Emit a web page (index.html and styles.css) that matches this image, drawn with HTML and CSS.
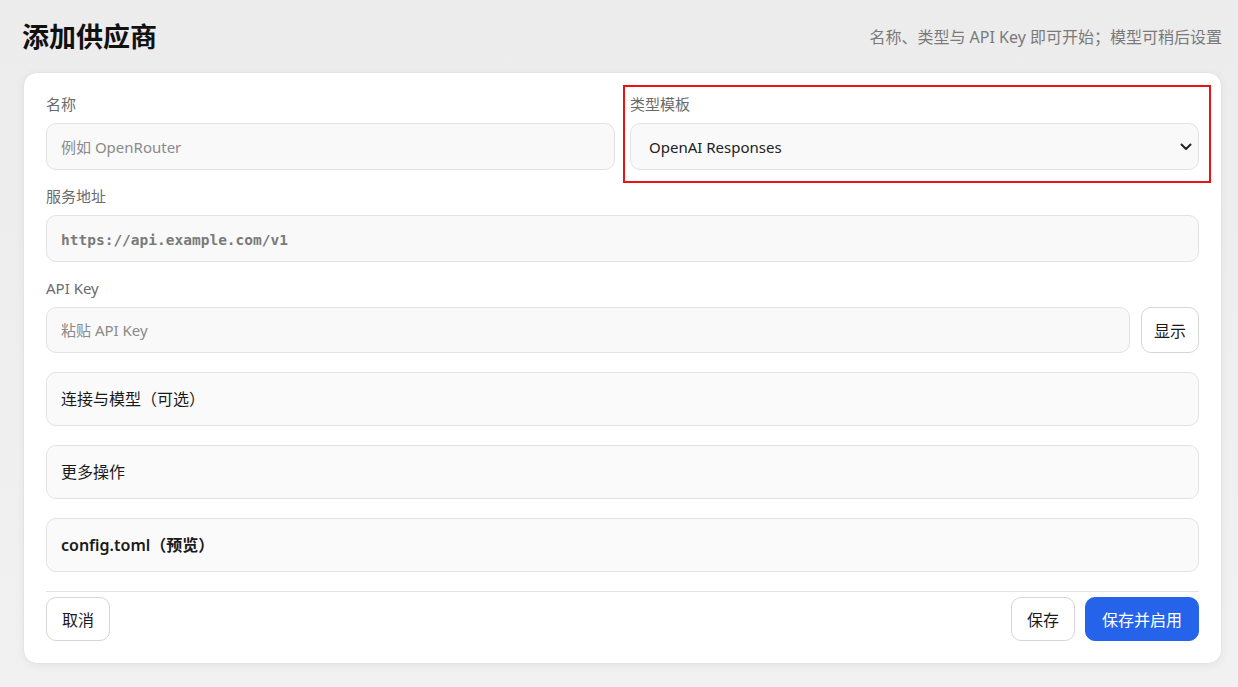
FILE: index.html
```html
<!DOCTYPE html>
<html lang="zh-CN">
<head>
    <meta charset="UTF-8">
    <meta name="viewport" content="width=device-width, initial-scale=1.0">
    <title>添加供应商</title>
    <link rel="stylesheet" href="styles.css">
</head>
<body>

    <div class="page">
        <div class="header">
            <h1>添加供应商</h1>
            <div class="hint">名称、类型与 API Key 即可开始；模型可稍后设置</div>
        </div>

        <form class="card">
            <div class="row">
                <div class="field">
                    <label>名称</label>
                    <input type="text" placeholder="例如 OpenRouter">
                </div>
                <div class="field highlighted">
                    <label>类型模板</label>
                    <div class="select-wrap">
                        <select>
                            <option>OpenAI Responses</option>
                            <option>OpenAI Chat</option>
                            <option>Anthropic</option>
                        </select>
                        <svg class="chevron" width="12" height="8" viewBox="0 0 12 8">
                            <path d="M1.5 1.5 L6 6 L10.5 1.5" fill="none" stroke="#222" stroke-width="2" stroke-linecap="round" stroke-linejoin="round"/>
                        </svg>
                    </div>
                    <div class="mark"></div>
                </div>
            </div>

            <div class="field">
                <label>服务地址</label>
                <input type="text" class="mono" placeholder="https://api.example.com/v1">
            </div>

            <div class="field">
                <label>API Key</label>
                <div class="key-row">
                    <input type="password" placeholder="粘贴 API Key">
                    <button type="button" class="btn">显示</button>
                </div>
            </div>

            <details class="section">
                <summary>连接与模型（可选）</summary>
            </details>
            <details class="section">
                <summary>更多操作</summary>
            </details>
            <details class="section">
                <summary class="strong">config.toml（预览）</summary>
            </details>

            <div class="footer">
                <button type="button" class="btn">取消</button>
                <div class="actions">
                    <button type="button" class="btn">保存</button>
                    <button type="submit" class="btn primary">保存并启用</button>
                </div>
            </div>
        </form>
    </div>

</body>
</html>
```

FILE: styles.css
```css
body {
    margin: 0;
    font-family: "Noto Sans", "Noto Sans CJK SC", sans-serif;
    background: linear-gradient(180deg, #ececec 0%, #f1f1f1 100%);
    color: #1a1a1a;
    height: 100vh;
    overflow: hidden;
}
.page {
    padding: 0 16px 0 23px;
}
.header {
    display: flex;
    justify-content: space-between;
    align-items: center;
    height: 72px;
}
h1 {
    margin: 0 0 2px -1px;
    font-size: 27px;
    font-weight: 700;
    color: #111;
}
.hint {
    font-size: 16px;
    color: #7a7a7a;
}
.card {
    background: #fff;
    border: 1px solid #e4e4e4;
    border-radius: 14px;
    box-shadow: 0 2px 8px rgba(0, 0, 0, 0.05);
    padding: 22px;
    display: flex;
    flex-direction: column;
    gap: 17px;
}
.row {
    display: grid;
    grid-template-columns: 1fr 1fr;
    gap: 15px;
}
.field {
    display: flex;
    flex-direction: column;
    gap: 9px;
    position: relative;
}
.field label {
    font-size: 15px;
    line-height: 19px;
    height: 19px;
    color: #6b6b6b;
}
input, select {
    box-sizing: border-box;
    width: 100%;
    height: 47px;
    border: 1px solid #e3e3e3;
    border-radius: 10px;
    background: #f9f9f9;
    font-family: inherit;
    font-size: 15px;
    color: #222;
    padding: 0 14px;
    outline: none;
}
input::placeholder { color: #8a8a8a; }
input.mono::placeholder {
    font-family: "DejaVu Sans Mono", monospace;
    font-size: 14.5px;
    font-weight: bold;
    color: #7a7a7a;
}
.select-wrap {
    position: relative;
}
select {
    appearance: none;
    padding: 0 18px;
}
.chevron {
    position: absolute;
    right: 7px;
    top: 20px;
    pointer-events: none;
}
.mark {
    position: absolute;
    left: -7px;
    top: -10px;
    right: -12px;
    bottom: -13px;
    border: 2px solid #ee1111;
    pointer-events: none;
}
.key-row {
    display: flex;
    gap: 11px;
}
.key-row input { flex: 1; height: 46px; }
.key-row .btn { height: 46px; padding: 0 12px; }
.btn {
    box-sizing: border-box;
    height: 44px;
    padding: 0 15px;
    border: 1px solid #d6d6d6;
    border-radius: 10px;
    background: #fff;
    font-family: inherit;
    font-size: 16px;
    color: #1a1a1a;
    cursor: pointer;
}
.section {
    border: 1px solid #e3e3e3;
    border-radius: 10px;
    background: #fafafa;
    margin-top: 2px;
}
.section summary {
    list-style: none;
    padding: 0 14px;
    height: 52px;
    line-height: 52px;
    font-size: 16px;
    color: #1a1a1a;
    cursor: pointer;
}
.section summary::-webkit-details-marker { display: none; }
.section summary.strong { font-weight: 600; }
.footer {
    display: flex;
    justify-content: space-between;
    border-top: 1px solid #e3e3e3;
    padding-top: 5px;
    margin-top: 2px;
}
.actions {
    display: flex;
    gap: 10px;
}
.btn.primary {
    background: #2563eb;
    border-color: #2563eb;
    color: #fff;
    padding: 0 16px;
}
```
